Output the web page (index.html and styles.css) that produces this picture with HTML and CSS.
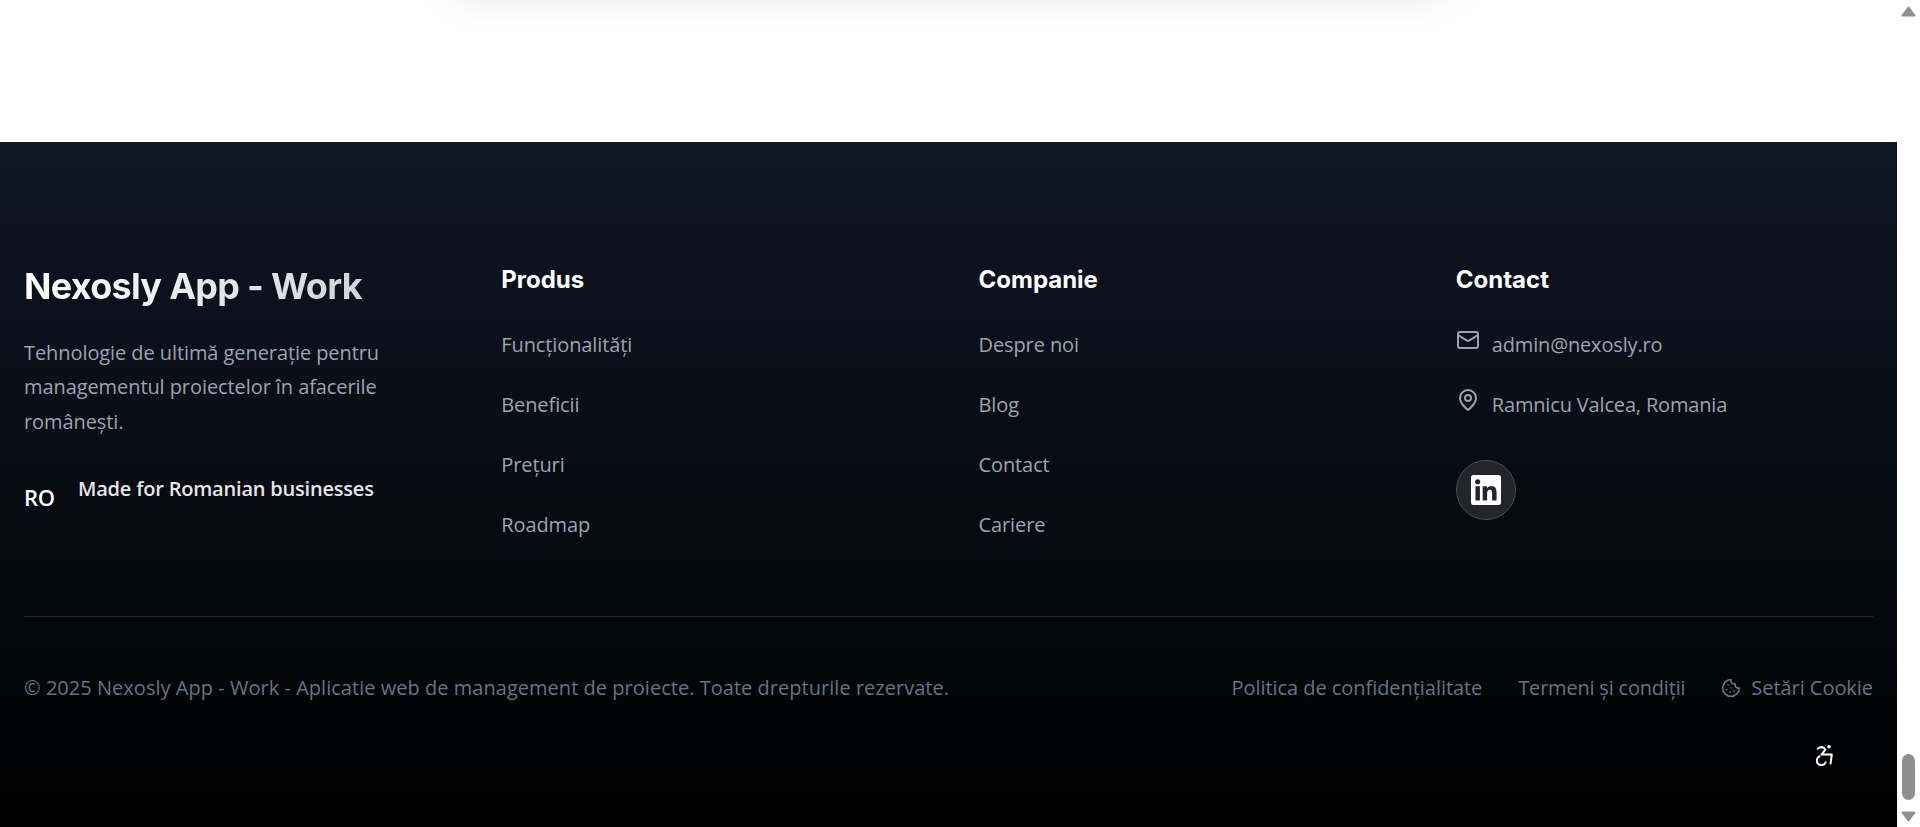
FILE: index.html
```html
<!DOCTYPE html>
<html lang="ro">
<head>
<meta charset="utf-8">
<title>Nexosly App - Work</title>
<link rel="stylesheet" href="styles.css">
</head>
<body>
<div class="page">
  <section class="upper"><div class="card"></div></section>
  <footer class="footer">
    <div class="grid">
      <div class="brand">
        <h2 class="title">Nexosly App - Work</h2>
        <p class="tagline">Tehnologie de ultimă generație pentru managementul proiectelor în afacerile românești.</p>
        <div class="made"><span class="ro">RO</span><span class="made-text">Made for Romanian businesses</span></div>
      </div>
      <div class="col">
        <h3 class="head">Produs</h3>
        <ul class="links">
          <li>Funcționalități</li><li>Beneficii</li><li>Prețuri</li><li>Roadmap</li>
        </ul>
      </div>
      <div class="col">
        <h3 class="head">Companie</h3>
        <ul class="links">
          <li>Despre noi</li><li>Blog</li><li>Contact</li><li>Cariere</li>
        </ul>
      </div>
      <div class="col">
        <h3 class="head">Contact</h3>
        <ul class="links">
          <li class="contact"><svg class="ic" viewBox="0 0 24 24" fill="none" stroke="currentColor" stroke-width="2" stroke-linecap="round" stroke-linejoin="round"><rect x="2" y="4" width="20" height="16" rx="2"/><path d="m22 7-8.97 5.7a1.94 1.94 0 0 1-2.06 0L2 7"/></svg><span>admin@nexosly.ro</span></li>
          <li class="contact"><svg class="ic" viewBox="0 0 24 24" fill="none" stroke="currentColor" stroke-width="2" stroke-linecap="round" stroke-linejoin="round"><path d="M20 10c0 6-8 12-8 12s-8-6-8-12a8 8 0 0 1 16 0Z"/><circle cx="12" cy="10" r="3"/></svg><span>Ramnicu Valcea, Romania</span></li>
        </ul>
        <a class="social"><svg class="li" viewBox="0 0 24 24"><path fill="#fff" d="M20.45 20.45h-3.56v-5.57c0-1.33-.02-3.04-1.85-3.04-1.85 0-2.14 1.45-2.14 2.94v5.67H9.35V9h3.41v1.56h.05c.48-.9 1.64-1.85 3.37-1.85 3.6 0 4.27 2.37 4.27 5.45v6.29zM5.34 7.43a2.06 2.06 0 1 1 0-4.13 2.06 2.06 0 0 1 0 4.13zM7.12 20.45H3.56V9h3.56v11.45zM22.23 0H1.77C.79 0 0 .77 0 1.73v20.54C0 23.23.79 24 1.77 24h20.45c.98 0 1.78-.77 1.78-1.73V1.73C24 .77 23.2 0 22.22 0z"/></svg></a>
      </div>
    </div>
    <div class="bottom">
      <p class="copy">© 2025 Nexosly App - Work - Aplicatie web de management de proiecte. Toate drepturile rezervate.</p>
      <div class="legal">
        <span>Politica de confidențialitate</span>
        <span class="terms">Termeni și condiții</span>
        <span class="cookie"><svg class="ck" viewBox="0 0 24 24" fill="none" stroke="currentColor" stroke-width="2" stroke-linecap="round" stroke-linejoin="round"><path d="M12 2a10 10 0 1 0 10 10 4 4 0 0 1-5-5 4 4 0 0 1-5-5"/><path d="M8.5 8.5v.01"/><path d="M16 15.5v.01"/><path d="M12 12v.01"/><path d="M11 17v.01"/><path d="M7 14v.01"/></svg>Setări Cookie</span>
      </div>
    </div>
  </footer>
  <svg class="a11y" viewBox="0 0 18 21" fill="none" stroke="#fff" stroke-width="2" stroke-linecap="round" stroke-linejoin="round"><circle cx="13" cy="1.8" r="1.8" fill="#fff" stroke="none"/><path d="M1.8 3.8C3.6 2.2 6.3 1.8 8 3L9.4 4.6 5.4 9.6H15.8L14.6 18.6"/><path d="M3.4 11.4A4.6 4.6 0 1 0 9.6 17.4"/></svg>
</div>
<div class="scrollbar">
  <svg class="arrow" viewBox="0 0 15 11"><path class="arrow-fill" d="M7.5 1.5 13.5 9.5H1.5Z"/></svg>
  <span class="track"><span class="thumb"></span></span>
  <svg class="arrow" viewBox="0 0 15 11"><path class="arrow-fill" d="M1.5 1.5H13.5L7.5 9.5Z"/></svg>
</div>
</body>
</html>
```
FILE: styles.css
```css
* { box-sizing: border-box; }
html, body { margin: 0; height: 100%; overflow: hidden; background: #fff; }
body { display: flex; font-family: "Open Sans", "Noto Sans", sans-serif; }
.page { flex: 1; min-width: 0; height: 827px; position: relative; display: flex; flex-direction: column; overflow: hidden; }
.upper { height: 142px; flex: none; display: flex; justify-content: center; }
.card { width: 1000px; height: 100px; margin-top: -134px; background: #fff; box-shadow: 0 25px 50px -12px rgba(30,30,0,.28); }
.footer { flex: 1; padding: 124px 24px 0; background: linear-gradient(to bottom, #0f1624, #000); }
.grid { display: grid; grid-template-columns: repeat(4, 1fr); column-gap: 60px; height: 351px; border-bottom: 1px solid #1f2937; }
.title { margin: 0; font: 700 36px/40px Inter, sans-serif; letter-spacing: -0.72px; background: linear-gradient(to right, #fff, #d1d5db); -webkit-background-clip: text; background-clip: text; color: transparent; width: fit-content; }
.tagline { margin: 29.7px 0 0; max-width: 384px; font-size: 20px; line-height: 34.5px; letter-spacing: -0.08px; color: #9ca3af; }
.made { display: flex; align-items: flex-start; gap: 23px; margin-top: 36px; }
.ro { font-size: 22px; font-weight: 600; color: #fff; margin-top: 7px; letter-spacing: -0.2px; }
.made-text { font-size: 20px; font-weight: 600; letter-spacing: -0.2px; color: #e5e7eb; }
.head { margin: -2px 0 0; font: 700 24px/32px Inter, sans-serif; color: #fff; }
.links { list-style: none; margin: 35px 0 0; padding: 0; display: flex; flex-direction: column; gap: 32px; font-size: 20px; line-height: 28px; letter-spacing: -0.1px; color: #9ca3af; }
.contact { display: flex; gap: 12px; letter-spacing: -0.16px; }
.ic { width: 24px; height: 24px; flex: none; margin-top: -3px; color: #9ca3af; }
.social { width: 60px; height: 60px; margin-top: 41px; border-radius: 50%; background: #232529; border: 1px solid #4b4d52; display: flex; align-items: center; justify-content: center; }
.li { width: 30px; height: 30px; }
.bottom { display: flex; justify-content: space-between; align-items: center; margin-top: 57px; font-size: 20px; line-height: 28px; color: #6b7280; }
.copy { margin: 0; letter-spacing: 0.03px; }
.legal { display: flex; gap: 36px; letter-spacing: -0.05px; }
.terms { letter-spacing: -0.2px; }
.cookie { display: flex; align-items: center; gap: 10px; }
.ck { width: 20px; height: 20px; }
.a11y { position: absolute; left: 1816px; top: 745px; width: 18px; height: 21px; }
.scrollbar { width: 23px; flex: none; height: 827px; display: flex; flex-direction: column; align-items: center; background: #fff; padding: 6px 0 5px; }
.track { flex: 1; width: 100%; display: flex; flex-direction: column; justify-content: flex-end; align-items: center; padding-bottom: 11px; }
.thumb { width: 13px; height: 46px; border-radius: 7px; background: #8f8f8f; }
.arrow { width: 15px; height: 11px; flex: none; }
.arrow-fill { fill: #8f8f8f; stroke: #8f8f8f; stroke-width: 2; stroke-linejoin: round; }
```
